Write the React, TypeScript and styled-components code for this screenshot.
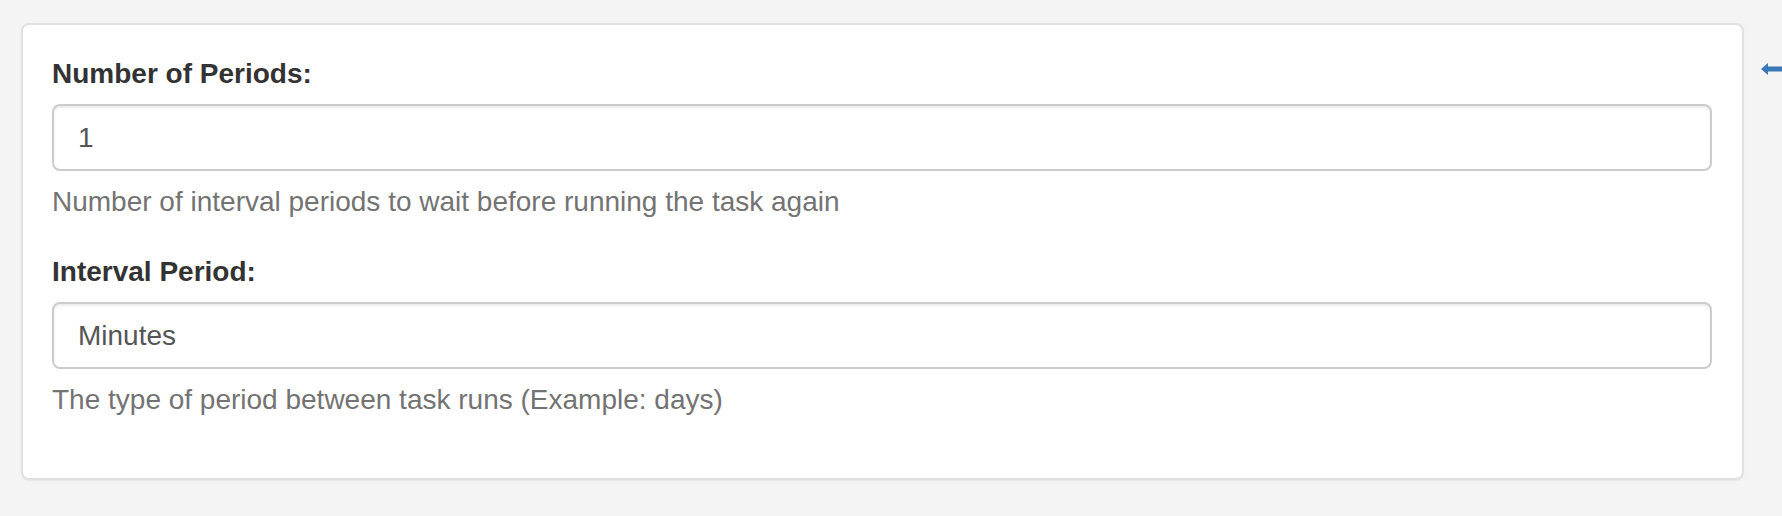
import React from "react";
import styled, { createGlobalStyle } from "styled-components";

const GlobalStyle = createGlobalStyle`
  html, body {
    margin: 0;
    padding: 0;
    background: #f4f4f4;
    overflow: hidden;
  }
  body {
    font-family: "Liberation Sans", Arial, Helvetica, sans-serif;
    color: #333;
  }
  * { box-sizing: border-box; }
`;

const Page = styled.div`
  display: flex;
  align-items: flex-start;
  padding: 23px 0 0 21px;
  width: 1782px;
  height: 516px;
  overflow: hidden;
`;

const Panel = styled.section`
  flex: 0 0 1723px;
  width: 1723px;
  background: #fff;
  border: 2px solid #e1e1e1;
  border-radius: 8px;
  box-shadow: 0 1px 2px rgba(0, 0, 0, 0.06);
  padding: 29px 30px 58px 29px;
`;

const FormGroup = styled.div`
  & + & {
    margin-top: 30px;
  }
`;

const Label = styled.label`
  display: block;
  font-size: 28px;
  line-height: 40px;
  font-weight: 700;
  color: #333;
  margin-bottom: 10px;
`;

const Field = styled.input`
  display: block;
  width: 100%;
  height: 67px;
  padding: 0 24px;
  font-family: inherit;
  font-size: 28px;
  color: #555;
  background: #fff;
  border: 2px solid #ccc;
  border-radius: 8px;
  box-shadow: inset 0 2px 2px rgba(0, 0, 0, 0.075);
  outline: none;
`;

const Help = styled.p`
  margin: 11px 0 0;
  font-size: 28px;
  line-height: 40px;
  color: #737373;
`;

const Aside = styled.div`
  flex: 0 0 auto;
  margin: 38px 0 0 17px;
  color: #3a77b7;
`;

const ArrowLeft = () => (
  <svg width="30" height="12" viewBox="0 0 30 12" aria-hidden="true">
    <path d="M0 6 L7 0 L7 3.5 L30 3.5 L30 8.5 L7 8.5 L7 12 Z" fill="currentColor" />
  </svg>
);

export default function App() {
  return (
    <>
      <GlobalStyle />
      <Page>
        <Panel>
          <FormGroup>
            <Label htmlFor="periods">Number of Periods:</Label>
            <Field id="periods" readOnly value="1" />
            <Help>Number of interval periods to wait before running the task again</Help>
          </FormGroup>
          <FormGroup>
            <Label htmlFor="interval">Interval Period:</Label>
            <Field id="interval" readOnly value="Minutes" />
            <Help>The type of period between task runs (Example: days)</Help>
          </FormGroup>
        </Panel>
        <Aside>
          <ArrowLeft />
        </Aside>
      </Page>
    </>
  );
}
